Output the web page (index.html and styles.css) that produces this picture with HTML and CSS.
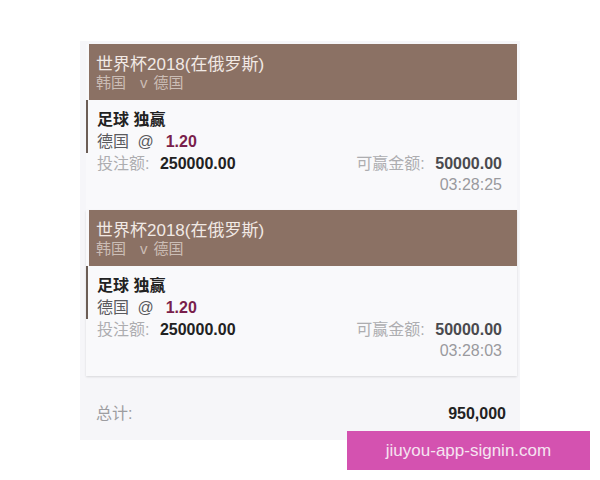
FILE: index.html
```html
<!DOCTYPE html>
<html lang="zh">
<head>
<meta charset="utf-8">
<link rel="stylesheet" href="styles.css">
</head>
<body>
<div class="panel">
  <div class="card">
    <div class="head">
      <div class="title">世界杯2018(在俄罗斯)</div>
      <div class="match">韩国<span class="vs">v</span>德国</div>
    </div>
    <div class="body">
      <div class="sel">
        <div class="market">足球 独赢</div>
        <div class="pick">德国 <span class="at">@</span><span class="odds">1.20</span></div>
      </div>
      <div class="row">
        <div><span class="lbl">投注额:</span> <span class="val">250000.00</span></div>
        <div><span class="lbl">可赢金额:</span> <span class="val win">50000.00</span></div>
      </div>
      <div class="time">03:28:25</div>
    </div>
  </div>
  <div class="card">
    <div class="head">
      <div class="title">世界杯2018(在俄罗斯)</div>
      <div class="match">韩国<span class="vs">v</span>德国</div>
    </div>
    <div class="body">
      <div class="sel">
        <div class="market">足球 独赢</div>
        <div class="pick">德国 <span class="at">@</span><span class="odds">1.20</span></div>
      </div>
      <div class="row">
        <div><span class="lbl">投注额:</span> <span class="val">250000.00</span></div>
        <div><span class="lbl">可赢金额:</span> <span class="val win">50000.00</span></div>
      </div>
      <div class="time">03:28:03</div>
    </div>
  </div>
  <div class="total">
    <span class="tlbl">总计:</span>
    <span class="tval">950,000</span>
  </div>
</div>
<div class="wm">jiuyou-app-signin.com</div>
</body>
</html>
```
FILE: styles.css
```css
html, body {
  margin: 0;
  padding: 0;
  background: #ffffff;
  font-family: "Liberation Sans", "Noto Sans CJK SC", sans-serif;
}
body {
  width: 600px;
  height: 480px;
  position: relative;
  overflow: hidden;
}
.panel {
  margin: 41px 0 0 80px;
  width: 440px;
  height: 399px;
  background: #f6f6f9;
  padding: 3px 3px 0 6px;
  box-sizing: border-box;
}
.card {
  height: 166px;
  display: flex;
  flex-direction: column;
  background: #f9f9fb;
}
.card + .card {
  box-shadow: 0 1px 2px rgba(0,0,0,0.12);
}
.head {
  height: 56px;
  margin-left: 3px;
  background: #8b7164;
  padding: 12px 0 0 7px;
  box-sizing: border-box;
}
.title {
  color: #f1e9e4;
  font-size: 17px;
  line-height: 18px;
}
.match {
  color: #cbbdb5;
  font-size: 15px;
  line-height: 18px;
}
.vs {
  margin: 0 6px 0 14px;
}
.body {
  flex: 1;
  padding: 0 15px 0 0;
}
.sel {
  border-left: 2px solid #6b5d56;
  padding: 9px 0 0 9px;
  height: 53px;
  box-sizing: border-box;
}
.market {
  font-size: 16px;
  font-weight: bold;
  color: #222;
  line-height: 22px;
}
.pick {
  font-size: 16px;
  color: #5a5a5e;
  line-height: 22px;
}
.at {
  margin: 0 12px 0 4px;
}
.odds {
  color: #7a1f4c;
  font-weight: bold;
}
.row {
  display: flex;
  justify-content: space-between;
  padding-left: 11px;
  font-size: 16px;
  line-height: 22px;
}
.lbl {
  color: #adadb0;
}
.val {
  color: #222;
  font-weight: bold;
  margin-left: 6px;
}
.val.win {
  color: #4a4a4e;
}
.time {
  text-align: right;
  color: #9a9a9e;
  font-size: 16px;
  line-height: 20px;
}
.total {
  display: flex;
  justify-content: space-between;
  padding: 28px 11px 0 10px;
  font-size: 16px;
  line-height: 20px;
}
.tlbl {
  color: #9d9da0;
}
.tval {
  color: #222;
  font-weight: bold;
}
.wm {
  position: absolute;
  left: 347px;
  top: 431px;
  width: 243px;
  height: 39px;
  background: #d452b0;
  color: #f6e4f1;
  font-size: 17px;
  line-height: 39px;
  text-align: center;
}
```
